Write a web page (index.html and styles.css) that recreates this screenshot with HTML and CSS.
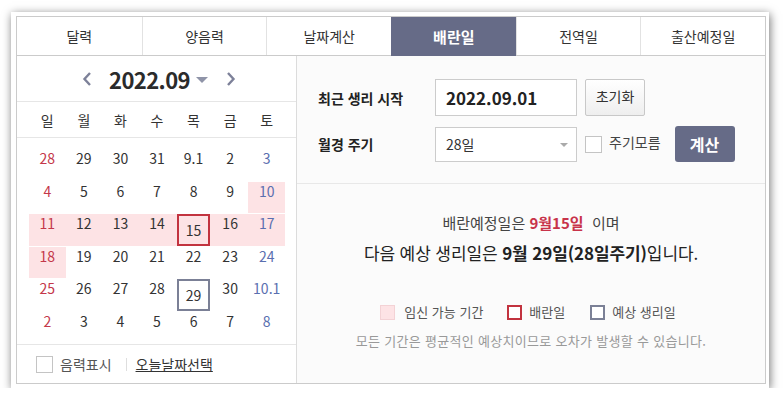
FILE: index.html
```html
<!DOCTYPE html>
<html lang="ko">
<head>
<meta charset="utf-8">
<title>배란일 계산기</title>
<link rel="stylesheet" href="styles.css">
</head>
<body>
<div class="frame">
  <div class="box">
    <nav class="tabs">
      <a class="tab">달력</a>
      <a class="tab">양음력</a>
      <a class="tab">날짜계산</a>
      <a class="tab active">배란일</a>
      <a class="tab">전역일</a>
      <a class="tab">출산예정일</a>
    </nav>
    <div class="main">
      <section class="cal">
        <div class="cal-head">
          <svg class="chev" width="10" height="14" viewBox="0 0 10 14"><polyline points="8,1 2.5,7 8,13" fill="none" stroke="#7d8199" stroke-width="2.4"/></svg>
          <span class="title">2022.09</span>
          <span class="caret"></span>
          <svg class="chev" width="10" height="14" viewBox="0 0 10 14"><polyline points="2,1 7.5,7 2,13" fill="none" stroke="#7d8199" stroke-width="2.4"/></svg>
        </div>
        <div class="weekdays">
          <span>일</span><span>월</span><span>화</span><span>수</span><span>목</span><span>금</span><span>토</span>
        </div>
        <div class="days">
          <div class="d sun">28</div><div class="d">29</div><div class="d">30</div><div class="d">31</div><div class="d">9.1</div><div class="d">2</div><div class="d sat">3</div>
          <div class="d sun">4</div><div class="d">5</div><div class="d">6</div><div class="d">7</div><div class="d">8</div><div class="d">9</div><div class="d sat fert">10</div>
          <div class="d sun fert">11</div><div class="d fert">12</div><div class="d fert">13</div><div class="d fert">14</div><div class="d fert"><span class="mark ovul">15</span></div><div class="d fert">16</div><div class="d sat fert">17</div>
          <div class="d sun fert">18</div><div class="d">19</div><div class="d">20</div><div class="d">21</div><div class="d">22</div><div class="d">23</div><div class="d sat">24</div>
          <div class="d sun">25</div><div class="d">26</div><div class="d">27</div><div class="d">28</div><div class="d"><span class="mark next">29</span></div><div class="d">30</div><div class="d sat">10.1</div>
          <div class="d sun">2</div><div class="d">3</div><div class="d">4</div><div class="d">5</div><div class="d">6</div><div class="d">7</div><div class="d sat">8</div>
        </div>
        <div class="cal-foot">
          <span class="check"></span>
          <span class="foot-label">음력표시</span>
          <span class="sep"></span>
          <a class="today">오늘날짜선택</a>
        </div>
      </section>
      <section class="panel">
        <div class="form">
          <div class="row row1">
            <span class="label">최근 생리 시작</span>
            <span class="input">2022.09.01</span>
            <span class="btn-light">초기화</span>
          </div>
          <div class="row row2">
            <span class="label">월경 주기</span>
            <span class="select">28일<span class="sel-arrow"></span></span>
            <span class="check"></span>
            <span class="check-label">주기모름</span>
            <span class="btn-dark">계산</span>
          </div>
        </div>
        <div class="result">
          <p class="line1">배란예정일은 <b class="red">9월15일</b>&nbsp; 이며</p>
          <p class="line2">다음 예상 생리일은 <b>9월 29일(28일주기)</b>입니다.</p>
          <div class="legend">
            <span class="sq sq-fert"></span><span class="lg-text">임신 가능 기간</span>
            <span class="sq sq-ovul"></span><span class="lg-text">배란일</span>
            <span class="sq sq-next"></span><span class="lg-text">예상 생리일</span>
          </div>
          <p class="note">모든 기간은 평균적인 예상치이므로 오차가 발생할 수 있습니다.</p>
        </div>
      </section>
    </div>
  </div>
</div>
</body>
</html>
```
FILE: styles.css
```css
* { box-sizing: border-box; }
html, body { margin: 0; padding: 0; background: #fff; }
body {
  font-family: "Noto Sans CJK KR", "Malgun Gothic", sans-serif;
  color: #333;
  font-size: 14px;
}
p { margin: 0; }

.frame {
  margin: 12px 0 0 11px;
  width: 758px;
  height: 376px;
  padding: 4px 4px 4px 5px;
  background: #fff;
  box-shadow: 1px 2px 9px rgba(0, 0, 0, 0.55);
}
.box {
  width: 750px;
  height: 368px;
  border: 1px solid #cbcbcb;
  display: flex;
  flex-direction: column;
}

/* tabs */
.tabs {
  display: grid;
  grid-template-columns: repeat(6, 1fr);
  height: 39px;
  border-bottom: 1px solid #cbcbcb;
  flex: none;
}
.tab {
  display: flex;
  align-items: center;
  justify-content: center;
  border-left: 1px solid #e2e2e2;
  font-size: 14px;
  color: #333;
  line-height: 20px;
}
.tab:first-child { border-left: 0; }
.tab.active {
  background: #666b87;
  color: #fff;
  font-weight: bold;
  font-size: 15px;
  border-left-color: #666b87;
  margin-bottom: -1px;
}

.main { display: flex; flex: 1; min-height: 0; }

/* calendar */
.cal {
  width: 279px;
  flex: none;
  display: flex;
  flex-direction: column;
  background: #fff;
}
.cal-head {
  height: 46px;
  border-bottom: 1px solid #e6e6e6;
  display: flex;
  align-items: center;
  justify-content: center;
  padding-left: 5px;
}
.chev { display: block; }
.title {
  font-size: 22px;
  font-weight: bold;
  letter-spacing: -0.6px;
  color: #2b2b2b;
  line-height: 26px;
  margin: 0 6px 0 17px;
}
.caret {
  width: 0; height: 0;
  border-left: 6px solid transparent;
  border-right: 6px solid transparent;
  border-top: 6px solid #8f94a8;
  margin: 2px 18px 0 0;
}
.weekdays {
  height: 36px;
  border-bottom: 1px solid #e6e6e6;
  display: grid;
  grid-template-columns: repeat(7, 1fr);
  padding: 0 11px 0 12px;
  align-items: center;
}
.weekdays span { text-align: center; font-size: 14px; color: #333; line-height: 20px; }
.days {
  display: grid;
  grid-template-columns: repeat(7, 1fr);
  grid-auto-rows: 31.5px;
  row-gap: 1px;
  padding: 11px 11px 1px 12px;
}
.d {
  display: flex;
  justify-content: center;
  font-size: 14px;
  line-height: 18px;
  color: #333;
}
.d.sun { color: #c4384a; }
.d.sat { color: #5a6fb0; }
.d.fert { background: #fde3e5; }
.mark {
  width: 33px;
  height: 31.5px;
  border: 2px solid;
  text-align: center;
  line-height: 28px;
  color: #333;
}
.mark.ovul { border-color: #c2333f; }
.mark.next { border-color: #7b8096; background: #fff; }

.cal-foot {
  flex: 1;
  border-top: 1px solid #e6e6e6;
  display: flex;
  align-items: center;
  padding-left: 19px;
}
.check {
  width: 17px;
  height: 17px;
  border: 1px solid #c4c4c4;
  background: #fff;
  flex: none;
}
.foot-label { margin-left: 7px; color: #555; font-size: 14px; line-height: 20px; }
.sep { width: 1px; height: 13px; background: #dedede; margin: 0 9px 0 14px; }
.today { color: #333; text-decoration: underline; font-size: 14px; line-height: 20px; }

/* right panel */
.panel {
  flex: 1;
  border-left: 1px solid #dcdcdc;
  background: #fbfbfb;
  display: flex;
  flex-direction: column;
}
.form {
  height: 128px;
  border-bottom: 1px solid #e8e8e8;
  padding: 23px 0 0 21px;
}
.row { display: flex; align-items: center; }
.row1 { height: 37px; }
.row2 { height: 36px; margin-top: 10px; }
.label {
  width: 117px;
  font-size: 14px;
  font-weight: bold;
  color: #222;
  line-height: 20px;
}
.input, .select {
  width: 142px;
  border: 1px solid #ccc;
  background: #fff;
  display: flex;
  align-items: center;
  padding-left: 10px;
}
.input {
  height: 37px;
  font-size: 17px;
  font-weight: bold;
  color: #222;
}
.select {
  height: 35px;
  font-size: 14px;
  color: #333;
  position: relative;
}
.sel-arrow {
  position: absolute;
  right: 8px;
  top: 15px;
  width: 0; height: 0;
  border-left: 4px solid transparent;
  border-right: 4px solid transparent;
  border-top: 4px solid #aaa;
}
.btn-light {
  margin-left: 8px;
  width: 60px;
  height: 37px;
  border: 1px solid #c8c8c8;
  border-radius: 2px;
  background: linear-gradient(#fff, #eee);
  display: flex;
  align-items: center;
  justify-content: center;
  font-size: 14px;
  color: #333;
  padding-bottom: 3px;
}
.row2 .check { margin-left: 8px; }
.check-label { margin-left: 7px; font-size: 14px; color: #444; line-height: 20px; padding-bottom: 4px; }
.btn-dark {
  margin-left: 14px;
  width: 60px;
  height: 36px;
  border-radius: 3px;
  background: #666b87;
  color: #fff;
  font-weight: bold;
  font-size: 16px;
  display: flex;
  align-items: center;
  justify-content: center;
}

.result {
  flex: 1;
  display: flex;
  flex-direction: column;
  align-items: center;
  padding-top: 29px;
}
.line1 { font-size: 15px; line-height: 20px; color: #444; }
.red { color: #c8334a; }
.line2 { margin-top: 8px; font-size: 17px; line-height: 24px; color: #222; letter-spacing: -0.1px; }
.legend {
  margin-top: 38px;
  display: flex;
  align-items: center;
  height: 18px;
  margin-left: -6px;
}
.sq { width: 15px; height: 15px; flex: none; }
.sq-fert { background: #fde3e5; border: 1px solid #f3d2d5; }
.sq-ovul { border: 2px solid #c2333f; background: #fff; margin-left: 24px; }
.sq-next { border: 2px solid #7b8096; background: #fff; margin-left: 25px; }
.lg-text { font-size: 13px; color: #555; line-height: 18px; margin-left: 7px; }
.sq-fert + .lg-text { margin-left: 9px; }
.note { margin-top: 11px; font-size: 13px; color: #999; line-height: 18px; letter-spacing: 0.3px; }
```
